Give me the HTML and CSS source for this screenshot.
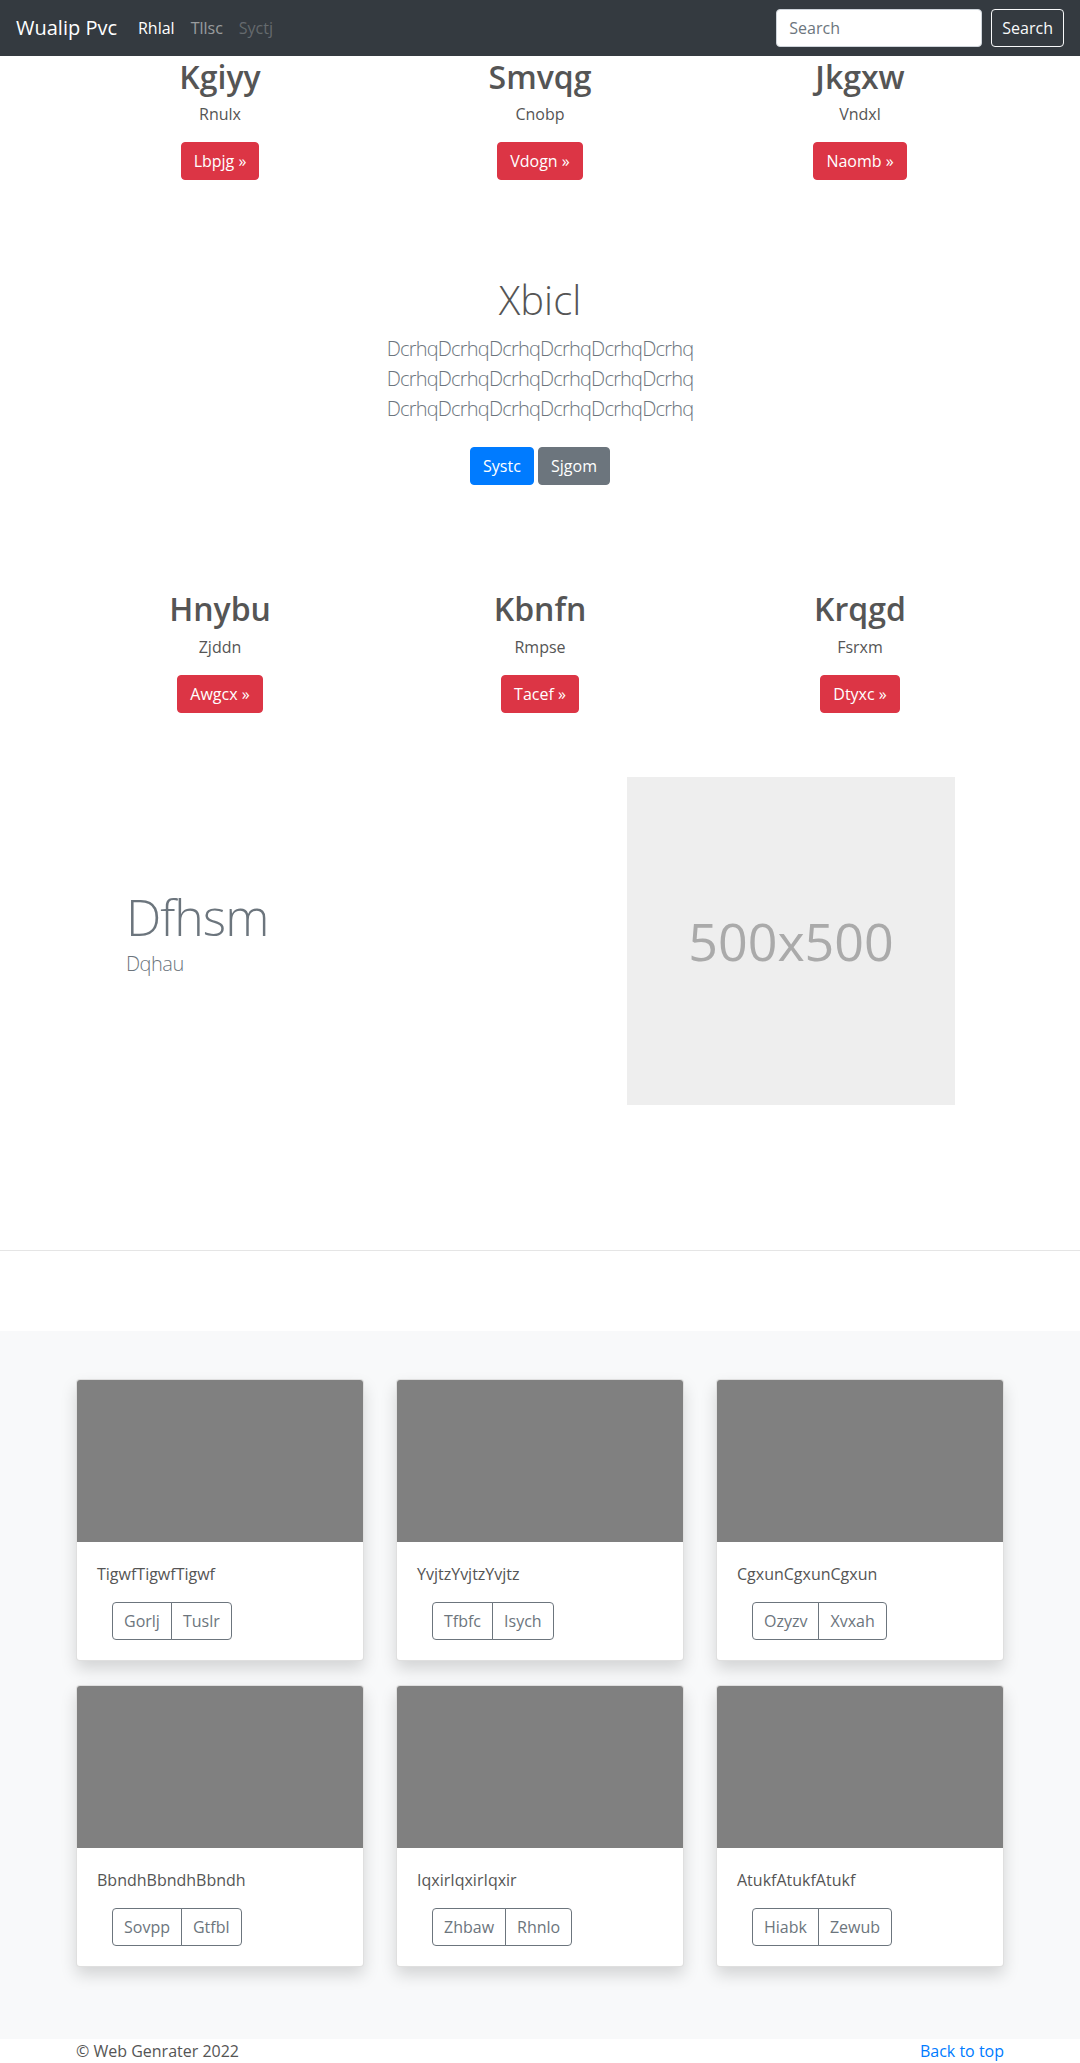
FILE: index.html
```html
<!DOCTYPE html>
<html lang="en">
<head>
  <meta charset="UTF-8">
  <title>Wualip Pvc</title>
  <link rel="stylesheet" href="styles.css">
</head>
<body>
  <nav class="navbar">
    <a class="brand" href="#">Wualip Pvc</a>
    <ul class="nav-links">
      <li><a class="active" href="#">Rhlal</a></li>
      <li><a href="#">Tllsc</a></li>
      <li><a class="disabled" href="#">Syctj</a></li>
    </ul>
    <form class="search">
      <input type="text" placeholder="Search">
      <button type="button" class="btn btn-outline-light">Search</button>
    </form>
  </nav>

  <main>
    <section class="container marketing first">
      <div class="col">
        <h2>Kgiyy</h2>
        <p>Rnulx</p>
        <p><a class="btn btn-danger" href="#">Lbpjg &raquo;</a></p>
      </div>
      <div class="col">
        <h2>Smvqg</h2>
        <p>Cnobp</p>
        <p><a class="btn btn-danger" href="#">Vdogn &raquo;</a></p>
      </div>
      <div class="col">
        <h2>Jkgxw</h2>
        <p>Vndxl</p>
        <p><a class="btn btn-danger" href="#">Naomb &raquo;</a></p>
      </div>
    </section>

    <section class="jumbotron">
      <h1>Xbicl</h1>
      <p class="lead">DcrhqDcrhqDcrhqDcrhqDcrhqDcrhq DcrhqDcrhqDcrhqDcrhqDcrhqDcrhq DcrhqDcrhqDcrhqDcrhqDcrhqDcrhq</p>
      <p class="actions">
        <a class="btn btn-primary" href="#">Systc</a>
        <a class="btn btn-secondary" href="#">Sjgom</a>
      </p>
    </section>

    <section class="container marketing second">
      <div class="col">
        <h2>Hnybu</h2>
        <p>Zjddn</p>
        <p><a class="btn btn-danger" href="#">Awgcx &raquo;</a></p>
      </div>
      <div class="col">
        <h2>Kbnfn</h2>
        <p>Rmpse</p>
        <p><a class="btn btn-danger" href="#">Tacef &raquo;</a></p>
      </div>
      <div class="col">
        <h2>Krqgd</h2>
        <p>Fsrxm</p>
        <p><a class="btn btn-danger" href="#">Dtyxc &raquo;</a></p>
      </div>
    </section>

    <section class="container featurette">
      <div class="featurette-text">
        <h2>Dfhsm</h2>
        <p class="lead">Dqhau</p>
      </div>
      <div class="placeholder">500x500</div>
    </section>

    <hr class="divider">

    <section class="album">
      <div class="cards">
        <div class="card">
          <div class="card-img"></div>
          <div class="card-body">
            <p>TigwfTigwfTigwf</p>
            <div class="btn-group"><a class="btn btn-outline" href="#">Gorlj</a><a class="btn btn-outline" href="#">Tuslr</a></div>
          </div>
        </div>
        <div class="card">
          <div class="card-img"></div>
          <div class="card-body">
            <p>YvjtzYvjtzYvjtz</p>
            <div class="btn-group"><a class="btn btn-outline" href="#">Tfbfc</a><a class="btn btn-outline" href="#">Isych</a></div>
          </div>
        </div>
        <div class="card">
          <div class="card-img"></div>
          <div class="card-body">
            <p>CgxunCgxunCgxun</p>
            <div class="btn-group"><a class="btn btn-outline" href="#">Ozyzv</a><a class="btn btn-outline" href="#">Xvxah</a></div>
          </div>
        </div>
        <div class="card">
          <div class="card-img"></div>
          <div class="card-body">
            <p>BbndhBbndhBbndh</p>
            <div class="btn-group"><a class="btn btn-outline" href="#">Sovpp</a><a class="btn btn-outline" href="#">Gtfbl</a></div>
          </div>
        </div>
        <div class="card">
          <div class="card-img"></div>
          <div class="card-body">
            <p>IqxirIqxirIqxir</p>
            <div class="btn-group"><a class="btn btn-outline" href="#">Zhbaw</a><a class="btn btn-outline" href="#">Rhnlo</a></div>
          </div>
        </div>
        <div class="card">
          <div class="card-img"></div>
          <div class="card-body">
            <p>AtukfAtukfAtukf</p>
            <div class="btn-group"><a class="btn btn-outline" href="#">Hiabk</a><a class="btn btn-outline" href="#">Zewub</a></div>
          </div>
        </div>
      </div>
    </section>
  </main>

  <footer class="footer">
    <p>&copy; Web Genrater 2022</p>
    <p><a href="#">Back to top</a></p>
  </footer>
</body>
</html>
```

FILE: styles.css
```css
body {
  margin: 0;
  font-family: "Open Sans", "Noto Sans", sans-serif;
  font-size: 16px;
  line-height: 1.5;
  color: #555;
  background: #fff;
}
a {
  text-decoration: none;
}
p {
  margin: 0 0 16px;
}

/* navbar */
.navbar {
  display: flex;
  align-items: center;
  height: 56px;
  padding: 0 16px;
  background: #343a40;
  box-sizing: border-box;
}
.brand {
  font-size: 20px;
  color: #fff;
  margin-right: 13px;
  line-height: 30px;
}
.nav-links {
  display: flex;
  list-style: none;
  margin: 0;
  padding: 0;
  flex: 1;
}
.nav-links a {
  display: block;
  padding: 8px;
  color: rgba(255, 255, 255, .5);
}
.nav-links a.active {
  color: #fff;
}
.nav-links a.disabled {
  color: rgba(255, 255, 255, .25);
}
.search {
  display: flex;
  gap: 9px;
}
.search input {
  width: 206px;
  height: 38px;
  box-sizing: border-box;
  padding: 6px 12px;
  font: inherit;
  color: #495057;
  border: 1px solid #ced4da;
  border-radius: 4px;
}
.search input::placeholder {
  color: #6c757d;
}
.search .btn {
  padding: 6px 10px;
}

/* buttons */
.btn {
  display: inline-block;
  padding: 6px 12px;
  font: inherit;
  font-size: 16px;
  line-height: 24px;
  border: 1px solid transparent;
  border-radius: 4px;
  color: #fff;
  cursor: pointer;
}
.btn-danger { background: #dc3545; border-color: #dc3545; }
.btn-primary { background: #007bff; border-color: #007bff; }
.btn-secondary { background: #6c757d; border-color: #6c757d; }
.btn-outline-light {
  background: transparent;
  border-color: #f8f9fa;
  color: #f8f9fa;
}

/* layout */
.container {
  width: 930px;
  margin: 0 auto;
}
.marketing {
  display: grid;
  grid-template-columns: repeat(3, 1fr);
  gap: 30px;
  text-align: center;
}
.marketing.first { padding-top: 2px; }
.marketing h2 {
  font-size: 32px;
  font-weight: 600;
  line-height: 1.2;
  margin: 0 0 6px;
}

.jumbotron {
  text-align: center;
  padding: 80px 0 97px;
}
.jumbotron h1 {
  font-size: 40px;
  font-weight: 300;
  line-height: 1.2;
  margin: 0 0 10px;
  color: #555;
}
.lead {
  font-size: 20px;
  font-weight: 300;
  color: #6c757d;
}
.jumbotron .lead {
  width: 450px;
  margin: 0 auto 15px;
  letter-spacing: -0.8px;
}
.jumbotron .actions {
  margin: 0;
}
.jumbotron .actions .btn {
  margin: 8px 0;
}

.featurette {
  display: grid;
  grid-template-columns: 1fr 378px;
  align-items: center;
  margin-top: 48px;
}
.featurette-text {
  padding-left: 51px;
}
.featurette h2 {
  font-size: 50px;
  font-weight: 300;
  line-height: 1;
  letter-spacing: -1px;
  color: #6c757d;
  margin: 6px 0 7px;
}
.featurette .lead {
  letter-spacing: -0.5px;
}
.placeholder {
  width: 328px;
  height: 328px;
  background: #eee;
  color: #aaa;
  font-size: 52px;
  display: flex;
  align-items: center;
  justify-content: center;
}

.divider {
  margin: 145px 0 80px;
  border: 0;
  border-top: 1px solid #e5e5e5;
}

/* album */
.album {
  background: #f8f9fa;
  padding: 48px 0;
}
.cards {
  width: 928px;
  margin: 0 auto;
  display: grid;
  grid-template-columns: repeat(3, 288px);
  column-gap: 32px;
  row-gap: 24px;
  padding-bottom: 24px;
}
.card {
  background: #fff;
  border: 1px solid rgba(0, 0, 0, .125);
  border-radius: 4px;
  overflow: hidden;
  box-shadow: 0 8px 16px rgba(0, 0, 0, .15);
}
.card-img {
  height: 162px;
  background: #808080;
}
.card-body {
  padding: 20px;
}
.btn-group {
  display: inline-flex;
  margin-left: 15px;
}
.btn-outline {
  background: transparent;
  border-color: #6c757d;
  color: #6c757d;
  padding: 6px 11px;
}
.btn-group .btn:first-child {
  border-radius: 4px 0 0 4px;
}
.btn-group .btn:last-child {
  border-radius: 0 4px 4px 0;
  margin-left: -1px;
}

/* footer */
.footer {
  width: 928px;
  margin: 0 auto;
  display: flex;
  justify-content: space-between;
  color: #555;
}
.footer a {
  color: #007bff;
}
```
